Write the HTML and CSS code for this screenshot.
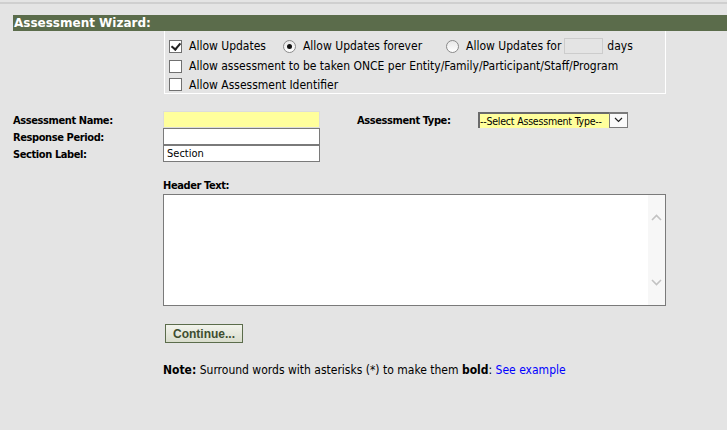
FILE: index.html
```html
<!DOCTYPE html>
<html lang="en">
<head>
    <meta charset="UTF-8">
    <title>Assessment Wizard</title>
    <link rel="stylesheet" href="styles.css">
</head>
<body>
<div class="topline"></div>
<div class="wizard">
    <h2 class="wizard-title">Assessment Wizard:</h2>

    <div class="options">
        <div class="opt-row">
            <label class="opt"><input type="checkbox" class="chk" checked> Allow Updates</label>
            <label class="opt opt-forever"><input type="radio" class="rad" name="updates" checked> Allow Updates forever</label>
            <label class="opt"><input type="radio" class="rad" name="updates"> Allow Updates for <input type="text" class="days" disabled> days</label>
        </div>
        <div class="opt-row">
            <label class="opt"><input type="checkbox" class="chk"> Allow assessment to be taken ONCE per Entity/Family/Participant/Staff/Program</label>
        </div>
        <div class="opt-row">
            <label class="opt"><input type="checkbox" class="chk"> Allow Assessment Identifier</label>
        </div>
    </div>

    <form class="details" onsubmit="return false;">
        <div class="field-grid">
            <label class="lbl" for="assessName">Assessment Name:</label>
            <input type="text" id="assessName" class="txt txt-required" autofocus>
            <span></span>
            <label class="lbl" for="assessType">Assessment Type:</label>
            <div class="select-wrap">
                <select id="assessType" class="sel">
                    <option>--Select Assessment Type--</option>
                </select>
                <span class="sel-btn">
                    <svg width="9" height="6" viewBox="0 0 9 6"><path d="M1 1 L4.5 4.5 L8 1" fill="none" stroke="#222" stroke-width="1.2"/></svg>
                </span>
            </div>

            <label class="lbl" for="responsePeriod">Response Period:</label>
            <input type="text" id="responsePeriod" class="txt">
            <span></span><span></span><span></span>

            <label class="lbl" for="sectionLabel">Section Label:</label>
            <input type="text" id="sectionLabel" class="txt" value="Section">
        </div>

        <div class="header-field">
            <label class="lbl" for="headerText">Header Text:</label>
            <div class="textbox">
                <textarea id="headerText"></textarea>
                <div class="scrollbar">
                    <svg width="11" height="7" viewBox="0 0 11 7"><path d="M1 6 L5.5 1.5 L10 6" fill="none" stroke="#c2c2c2" stroke-width="1.6"/></svg>
                    <svg width="11" height="7" viewBox="0 0 11 7"><path d="M1 1 L5.5 5.5 L10 1" fill="none" stroke="#c2c2c2" stroke-width="1.6"/></svg>
                </div>
            </div>

            <button type="submit" class="continue-btn">Continue...</button>

            <p class="note"><b>Note:</b> Surround words with asterisks (*) to make them <b>bold</b>: <a href="#">See example</a></p>
        </div>
    </form>
</div>
</body>
</html>
```

FILE: styles.css
```css
html, body { margin: 0; padding: 0; }
body {
    background: #e4e4e4;
    font-family: 'DejaVu Sans Condensed', 'DejaVu Sans', sans-serif;
    font-size: 12px;
    color: #000;
    height: 430px;
    overflow: hidden;
}
.topline { height: 2px; margin-top: 2px; background: #cfcfcf; }

.wizard { padding: 11px 0 0 13px; }
.wizard-title {
    margin: 0;
    height: 16px;
    line-height: 16px;
    padding-left: 1px;
    background: #5b6c4b;
    color: #fff;
    font-family: 'DejaVu Sans', sans-serif;
    font-size: 12px;
    font-weight: bold;
}

/* option box under the title bar */
.options {
    margin-left: 151px;
    width: 500px;
    border: 1px solid #fff;
    border-top: none;
    padding-top: 5px;
}
.opt-row { display: flex; align-items: center; height: 20px; padding-left: 4px; }
.opt-row:last-child { height: 17px; }
.opt { display: inline-flex; align-items: center; white-space: nowrap; }
.opt-forever { margin-left: 17px; margin-right: 24px; }

.chk, .rad {
    appearance: none;
    -webkit-appearance: none;
    margin: 0 7px 0 0;
    width: 13px;
    height: 13px;
    background: #fff;
    border: 1px solid #707070;
    box-sizing: border-box;
    position: relative;
}
.chk:checked::after {
    content: '';
    position: absolute;
    left: 3px;
    top: 0px;
    width: 4px;
    height: 7px;
    border: solid #222;
    border-width: 0 2px 2px 0;
    transform: rotate(40deg);
}
.rad {
    border-radius: 50%;
    border-color: #8a8a8a;
    background: linear-gradient(#e8e8e8, #fff);
}
.rad:checked::after {
    content: '';
    position: absolute;
    left: 3px;
    top: 3px;
    width: 5px;
    height: 5px;
    border-radius: 50%;
    background: #111;
}
.days {
    width: 39px;
    height: 16px;
    box-sizing: border-box;
    margin: 0 4px 0 3px;
    background: #e4e4e4;
    border: 1px solid #ccc;
}

/* name / type / section fields */
.details { margin-top: 17px; }
.field-grid {
    display: grid;
    grid-template-columns: 150px 157px 37px 121px auto;
    align-items: center;
}
.lbl { font-weight: bold; font-size: 11px; letter-spacing: -0.4px; }
.field-grid .lbl { padding-top: 2px; }
.txt {
    width: 157px;
    height: 17px;
    box-sizing: border-box;
    border: 1px solid #7a7a7a;
    background: #fff;
    padding: 0 3px;
    font-family: 'DejaVu Sans Condensed', sans-serif;
    font-size: 11px;
    outline: none;
}
.txt-required { background: #ffff9c; border-color: #dcdcdc; caret-color: #00008b; }

.select-wrap { display: inline-flex; width: 150px; height: 16px; }
.sel {
    appearance: none;
    -webkit-appearance: none;
    width: 131px;
    height: 16px;
    border: none;
    border-top: 2px solid #6a6a6a;
    border-left: 2px solid #6a6a6a;
    background: #ffff9c;
    padding: 0;
    font-family: 'DejaVu Sans Condensed', sans-serif;
    font-size: 10.5px;
    letter-spacing: -0.2px;
    outline: none;
}
.sel-btn {
    width: 19px;
    height: 16px;
    box-sizing: border-box;
    border: 1px solid #7a7a7a;
    border-top-width: 2px;
    background: #fafafa;
    display: flex;
    align-items: center;
    justify-content: center;
}

/* header text area */
.header-field { margin: 16px 0 0 150px; width: 503px; }
.textbox {
    margin-top: 2px;
    height: 112px;
    box-sizing: border-box;
    border: 1px solid #7a7a7a;
    background: #fff;
    display: flex;
}
.textbox textarea { flex: 1; border: none; resize: none; outline: none; padding: 2px; }
.scrollbar {
    width: 17px;
    background: #f7f7f7;
    display: flex;
    flex-direction: column;
    justify-content: space-between;
    align-items: center;
    padding: 19px 0 19px;
}

.continue-btn {
    margin: 18px 0 0 2px;
    height: 19px;
    padding: 0 7px;
    border: 1px solid #5b6c4b;
    background: linear-gradient(#f2f3ec, #d9ddcd);
    color: #3e4d30;
    font-family: 'Liberation Sans', Arial, sans-serif;
    font-size: 12px;
    font-weight: bold;
    cursor: pointer;
}

.note { margin: 20px 0 0; }
.note a { color: #00f; text-decoration: none; }
```
